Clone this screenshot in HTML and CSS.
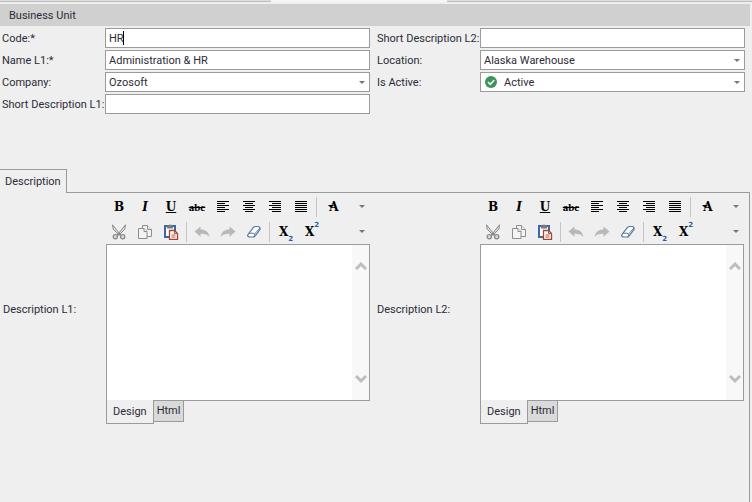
FILE: index.html
```html
<!DOCTYPE html>
<html lang="en">
<head>
<meta charset="utf-8">
<title>Business Unit</title>
<link rel="stylesheet" href="styles.css">
</head>
<body>
<svg class="sprite" aria-hidden="true">
  <symbol id="left" viewBox="0 0 16 16"><path d="M2 2.500h12M2 4.500h8M2 6.500h12M2 8.500h8M2 10.500h12M2 12.500h8" stroke="#000"/></symbol>
  <symbol id="center" viewBox="0 0 16 16"><path d="M2 2.500h12M4 4.500h8M2 6.500h12M4 8.500h8M2 10.500h12M4 12.500h8" stroke="#000"/></symbol>
  <symbol id="right" viewBox="0 0 16 16"><path d="M2 2.500h12M5 4.500h9M2 6.500h12M5 8.500h9M2 10.500h12M5 12.500h9" stroke="#000"/></symbol>
  <symbol id="justify" viewBox="0 0 16 16"><path d="M2 2.500h12M2 4.500h12M2 6.500h12M2 8.500h12M2 10.500h12M2 12.500h12" stroke="#000"/></symbol>
  <symbol id="cut" viewBox="0 0 16 16"><g fill="#ddd" stroke="#8a8a8a"><path d="M1.500 .8 9.700 11 8 11 2.200 5.200zM14.500 .8 6.300 11 8 11 13.800 5.200z"/><circle cx="4.300" cy="12.800" r="2.100" stroke-width="1.300"/><circle cx="11.700" cy="12.800" r="2.100" stroke-width="1.300"/></g></symbol>
  <symbol id="copy" viewBox="0 0 16 16"><g fill="#f3f3f3" stroke="#8e8e8e"><path d="M5.500 1.500h5l4 4v7h-9z"/><path d="M10.500 1.500v4h4"/><path d="M1.500 4.500h5.500l3 3v7h-8.500z"/><path d="M7 4.500v3h3"/></g></symbol>
  <symbol id="paste" viewBox="0 0 16 16"><path d="M2 2h10v11H2z" fill="#fff" stroke="#3a67a8" stroke-width="2"/><path d="M4 1.500h6v3H4z" fill="#777"/><path d="M6 .5h2v2H6z" fill="#888"/><path d="M6.500 6.500h5l3 3v6h-8z" fill="#fff" stroke="#a7432c" stroke-width="1.300"/><path d="M11.500 6.500v3h3M8.500 11h4M8.500 13h4" fill="none" stroke="#b85036"/></symbol>
  <symbol id="undo" viewBox="0 0 16 16"><path d="M.5 7.500 6.500 2.500v3c5 0 8 2.300 9 7.500-2-2.500-4.500-3.300-9-3.200v3z" fill="#b8b8b8"/></symbol>
  <symbol id="redo" viewBox="0 0 16 16"><path d="M15.500 7.500 9.500 2.500v3c-5 0-8 2.300-9 7.500 2-2.500 4.500-3.300 9-3.200v3z" fill="#b8b8b8"/></symbol>
  <symbol id="erase" viewBox="0 0 16 16"><path d="M2 10.500 7.500 3.500q1-1 2-1h3q2 .5 1.500 3L9 12q-1 1-2 1H3.500q-2.500-.5-1.500-2.500z" fill="#fff" stroke="#54789f" stroke-width="1.200"/><path d="M2.500 10q1-1 2.500-.8h2q2 .5 1.500 2.500M8.500 10l5.500-6" fill="none" stroke="#54789f"/></symbol>
  <symbol id="up" viewBox="0 0 12 10"><path d="m1 8 5-5 5 5" fill="none" stroke="#bdbdbd" stroke-width="3"/></symbol>
  <symbol id="down" viewBox="0 0 12 10"><path d="m1 2 5 5 5-5" fill="none" stroke="#bdbdbd" stroke-width="3"/></symbol>
  <symbol id="ok" viewBox="0 0 12 12"><circle cx="6" cy="6" r="6" fill="#3b9458"/><path d="m3 6 2.300 2.300 4-4.300" fill="none" stroke="#fff" stroke-width="1.500"/></symbol>
</svg>

<div class="strip"><span></span><span></span><span></span></div>
<h1 class="title">Business Unit</h1>

<form class="fields">
  <label for="code">Code:*</label>
  <div class="typed"><input id="code" class="box" type="text" value="HR"></div>
  <label class="second" for="short2">Short Description L2:</label>
  <input id="short2" class="box" type="text">

  <label for="name">Name L1:*</label>
  <input id="name" class="box" type="text" value="Administration &amp; HR">
  <label class="second" for="location">Location:</label>
  <div class="pick"><select id="location" class="box"><option>Alaska Warehouse</option></select></div>

  <label for="company">Company:</label>
  <div class="pick"><select id="company" class="box"><option>Ozosoft</option></select></div>
  <label class="second" for="active">Is Active:</label>
  <div class="pick status"><svg class="ok"><use href="#ok"/></svg><select id="active" class="box"><option>Active</option></select></div>

  <label for="short1">Short Description L1:</label>
  <input id="short1" class="box" type="text">
</form>

<nav class="tabs"><button class="tab" type="button">Description</button></nav>
<section class="panel">
  <label for="desc1">Description L1:</label>
  <div class="editor">
    <div class="toolbar">
      <button type="button" class="bold">B</button><button type="button" class="italic">I</button><button type="button" class="under">U</button><button type="button" class="strike">abc</button><button type="button" aria-label="Align left"><svg><use href="#left"/></svg></button><button type="button" aria-label="Center"><svg><use href="#center"/></svg></button><button type="button" aria-label="Align right"><svg><use href="#right"/></svg></button><button type="button" aria-label="Justify"><svg><use href="#justify"/></svg></button><i class="sep"></i><button type="button" class="font">A</button><button type="button" class="more" aria-label="More"></button>
    </div>
    <div class="toolbar">
      <button type="button" aria-label="Cut"><svg><use href="#cut"/></svg></button><button type="button" aria-label="Copy"><svg><use href="#copy"/></svg></button><button type="button" aria-label="Paste"><svg><use href="#paste"/></svg></button><i class="sep"></i><button type="button" aria-label="Undo"><svg><use href="#undo"/></svg></button><button type="button" aria-label="Redo"><svg><use href="#redo"/></svg></button><button type="button" aria-label="Clear formatting"><svg><use href="#erase"/></svg></button><i class="sep"></i><button type="button" class="script">X<sub>2</sub></button><button type="button" class="script">X<sup>2</sup></button><button type="button" class="more" aria-label="More"></button>
    </div>
    <div class="area">
      <textarea id="desc1"></textarea>
      <div class="scroll"><button type="button" aria-label="Scroll up"><svg><use href="#up"/></svg></button><button type="button" aria-label="Scroll down"><svg><use href="#down"/></svg></button></div>
    </div>
    <div class="views"><button type="button" class="current">Design</button><button type="button" class="other">Html</button></div>
  </div>

  <label class="second" for="desc2">Description L2:</label>
  <div class="editor">
    <div class="toolbar">
      <button type="button" class="bold">B</button><button type="button" class="italic">I</button><button type="button" class="under">U</button><button type="button" class="strike">abc</button><button type="button" aria-label="Align left"><svg><use href="#left"/></svg></button><button type="button" aria-label="Center"><svg><use href="#center"/></svg></button><button type="button" aria-label="Align right"><svg><use href="#right"/></svg></button><button type="button" aria-label="Justify"><svg><use href="#justify"/></svg></button><i class="sep"></i><button type="button" class="font">A</button><button type="button" class="more" aria-label="More"></button>
    </div>
    <div class="toolbar">
      <button type="button" aria-label="Cut"><svg><use href="#cut"/></svg></button><button type="button" aria-label="Copy"><svg><use href="#copy"/></svg></button><button type="button" aria-label="Paste"><svg><use href="#paste"/></svg></button><i class="sep"></i><button type="button" aria-label="Undo"><svg><use href="#undo"/></svg></button><button type="button" aria-label="Redo"><svg><use href="#redo"/></svg></button><button type="button" aria-label="Clear formatting"><svg><use href="#erase"/></svg></button><i class="sep"></i><button type="button" class="script">X<sub>2</sub></button><button type="button" class="script">X<sup>2</sup></button><button type="button" class="more" aria-label="More"></button>
    </div>
    <div class="area">
      <textarea id="desc2"></textarea>
      <div class="scroll"><button type="button" aria-label="Scroll up"><svg><use href="#up"/></svg></button><button type="button" aria-label="Scroll down"><svg><use href="#down"/></svg></button></div>
    </div>
    <div class="views"><button type="button" class="current">Design</button><button type="button" class="other">Html</button></div>
  </div>
</section>
</body>
</html>
```
FILE: styles.css
```css
* { box-sizing: border-box; }
body {
  margin: 0;
  min-height: 100vh;
  display: flex;
  flex-direction: column;
  background: #efefef;
  color: #2c2c38;
  font: 11px/16px Roboto, "Liberation Sans", sans-serif;
}
button, input, select, textarea {
  font: inherit;
  color: inherit;
  margin: 0;
  border-radius: 0;
  outline: 0;
}
button { padding: 0; border: 0; background: none; }
label { white-space: nowrap; padding-top: 2px; }
.sprite { position: absolute; width: 0; height: 0; }

.strip { display: grid; grid-template-columns: 271fr 176fr 305fr; height: 4px; }
.strip span { height: 2px; background: #dedede; border-bottom: 1px solid #bcbcbc; }
.strip span:nth-child(2) { background: #f6f6f6; border: 0; }
.title {
  margin: 0 2px 2px 0;
  padding: 4px 9px 2px;
  background: #d0d0d0;
  font-size: 11px;
  font-weight: normal;
}

.fields, .panel {
  display: grid;
  grid-template-columns: 103px 1fr 110px 1fr;
}
.fields {
  row-gap: 2px;
  padding: 0 7px 0 2px;
  align-items: center;
}
.second { padding-left: 7px; }
.box {
  display: block;
  width: 100%;
  height: 20px;
  padding: 0 3px;
  border: 1px solid #9b9b9b;
  background: #fff;
  appearance: none;
}
select.box { padding-top: 1px; }
.typed, .pick { position: relative; }
.typed::after {
  content: "";
  position: absolute;
  left: 18px;
  top: 3px;
  width: 1px;
  height: 14px;
  background: #000;
}
.status .box { padding-left: 23px; }
.ok { position: absolute; left: 5px; top: 4px; width: 12px; height: 12px; }
.pick::after, .more::after {
  content: "";
  border: 3px solid transparent;
  border-top-color: #777;
  border-bottom: 0;
}
.pick::after { position: absolute; right: 5px; top: 9px; pointer-events: none; }

.tabs { display: flex; margin-top: 55px; }
.tab {
  position: relative;
  z-index: 1;
  height: 24px;
  margin-bottom: -1px;
  padding: 0 5px;
  background: #efefef;
  border: 1px solid #9b9b9b;
  border-width: 1px 1px 0 0;
}
.panel {
  flex: 1;
  grid-template-rows: max-content;
  align-items: center;
  margin-right: 2px;
  padding: 1px 5px 0 3px;
  border: 1px solid #9b9b9b;
  border-width: 1px 1px 0 0;
}
.toolbar { display: flex; align-items: center; height: 25px; color: #000; }
.toolbar button {
  display: flex;
  align-items: center;
  justify-content: center;
  width: 26px;
  height: 22px;
  font: bold 12px/16px "DejaVu Serif", "Liberation Serif", serif;
}
.toolbar svg { width: 16px; height: 16px; }
.toolbar .italic { font-style: italic; }
.toolbar .under { text-decoration: underline; }
.toolbar .strike { font: bold 11px/16px "Liberation Serif", serif; text-decoration: line-through; }
.toolbar .font { width: 30px; position: relative; }
.font::before {
  content: "";
  position: absolute;
  left: 9px;
  top: 9px;
  border: 3px solid transparent;
  border-top-color: #000;
  border-bottom: 0;
}
.toolbar .script { padding-left: 2px; }
.toolbar sub, .toolbar sup { color: #2857a4; font: bold 7px/8px "DejaVu Sans", sans-serif; }
.toolbar sub { align-self: flex-end; }
.toolbar sup { align-self: flex-start; }
.toolbar .more { width: 16px; margin-left: auto; }
.sep { width: 1px; height: 20px; margin: 0 2px; background: #c4c4c4; }

.area { display: flex; height: 157px; border: 1px solid #9b9b9b; background: #fff; }
.area textarea { flex: 1; min-width: 0; border: 0; resize: none; background: #fff; }
.scroll {
  display: flex;
  flex-direction: column;
  justify-content: space-between;
  align-items: center;
  width: 17px;
  padding: 16px 0;
  background: #f8f8f8;
}
.scroll button, .scroll svg { display: block; width: 12px; height: 10px; }
.views { display: flex; align-items: flex-start; }
.views .current {
  height: 24px;
  margin-top: -1px;
  padding: 1px 6px 0;
  background: #efefef;
  border: 1px solid #9b9b9b;
  border-top: 0;
}
.views .other {
  height: 21px;
  padding: 0 3px;
  background: #dadada;
  border: 1px solid #9b9b9b;
  border-width: 0 1px 1px 0;
}
```
